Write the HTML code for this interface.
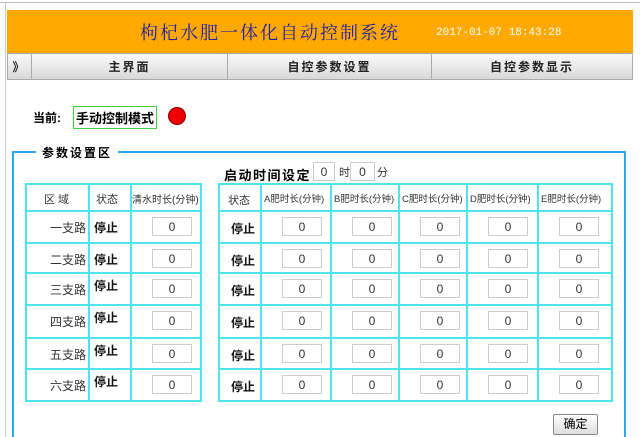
<!DOCTYPE html><html><head><meta charset="utf-8"><style>
html,body{margin:0;width:640px;height:437px;overflow:hidden}
body{background:#fff;position:relative;font-family:"Liberation Sans","Noto Sans CJK SC",sans-serif;}
.a{position:absolute}
.hdr{left:7px;top:10px;width:626px;height:43px;background:#ffa800;}
.title{left:140px;top:19px;font-size:18px;color:#2020a0;font-family:"Liberation Serif","Noto Serif CJK SC",serif;letter-spacing:2px}
.time{left:436px;top:27px;font-size:11px;color:#fff;font-family:"Liberation Mono",monospace}
.nav{top:53px;height:27px;background:linear-gradient(#fafafa,#d8d8d8);border:1px solid #aaa;box-sizing:border-box;font-size:12px;font-weight:bold;text-align:center;line-height:26px;color:#222;letter-spacing:2px}
.in{position:absolute;width:40px;height:19px;border:1px solid #ccc;background:#fff;font-size:12px;color:#333;text-align:center;line-height:19px;box-sizing:border-box}
.t{position:absolute;font-size:11px;color:#333}
.b{position:absolute;font-size:12px;font-weight:bold;color:#111}
.hl{position:absolute;height:2px;background:#4ee4ee}
.vl{position:absolute;width:2px;background:#4ee4ee}
</style></head><body>
<div class="a" style="left:0;top:2px;width:640px;height:1px;background:#bbb"></div>
<div class="a" style="left:5px;top:3px;width:1px;height:434px;background:#ccc"></div>
<div class="a hdr"></div>
<div class="a title">枸杞水肥一体化自动控制系统</div>
<div class="a time">2017-01-07 18:43:28</div>
<div class="a nav" style="left:7px;width:25px">》</div>
<div class="a nav" style="left:31px;width:197px">主界面</div>
<div class="a nav" style="left:227px;width:205px">自控参数设置</div>
<div class="a nav" style="left:431px;width:202px">自控参数显示</div>
<div class="a" style="left:33px;top:109px;font-size:12px;font-weight:bold">当前:</div>
<div class="a" style="left:73px;top:106px;border:1px solid #4c4;padding:1px 2px;font-size:13px;font-weight:bold">手动控制模式</div>
<div class="a" style="left:169px;top:108px;width:16px;height:16px;border-radius:50%;background:#e00;box-shadow:0 0 0 1px #800"></div>
<div class="a" style="left:12px;top:151px;width:614px;height:286px;border:2px solid #2aa8e8;border-bottom:none;box-sizing:border-box"></div>
<div class="a" style="left:36px;top:144px;background:#fff;padding:0 6px;font-size:12px;font-weight:bold;letter-spacing:2px">参数设置区</div>
<div class="a" style="left:224px;top:165px;font-size:13px;font-weight:bold;letter-spacing:1.5px">启动时间设定</div>
<div class="in" style="left:313px;top:162px;width:22px">0</div><div class="t" style="left:339px;top:164px">时</div>
<div class="in" style="left:350px;top:162px;width:25px">0</div><div class="t" style="left:377px;top:164px">分</div>
<div id="g"></div>
<div class="a" style="left:553px;top:414px;width:43px;height:19px;border:1px solid #888;background:linear-gradient(#fff,#ddd);font-size:12px;text-align:center;line-height:19px;border-radius:2px">确定</div>
<script>
var rows=[183,210,242,272,304,337,368,400];
var L=[25,88,130,200],R=[218,260,330,398,466,537,611];
var h='';
rows.forEach(function(y){h+='<div class="hl" style="left:25px;top:'+y+'px;width:177px"></div><div class="hl" style="left:218px;top:'+y+'px;width:395px"></div>';});
L.forEach(function(x){h+='<div class="vl" style="left:'+x+'px;top:183px;height:219px"></div>';});
R.forEach(function(x){h+='<div class="vl" style="left:'+x+'px;top:183px;height:219px"></div>';});
h+='<div class="t" style="left:44px;top:191px">区 域</div><div class="t" style="left:96px;top:191px">状态</div><div class="t" style="left:132px;top:191px;font-size:10px">清水时长(分钟)</div>';
h+='<div class="t" style="left:228px;top:192px">状态</div>';
['A','B','C','D','E'].forEach(function(c,i){h+='<div class="t" style="left:'+(R[i+1]+4)+'px;top:191px;font-size:9.5px">'+c+'肥时长(分钟)</div>';});
var nm=['一','二','三','四','五','六'];
for(var i=0;i<6;i++){var y=rows[i+1];
h+='<div class="t" style="left:50px;top:'+(y+9)+'px;font-size:12px">'+nm[i]+'支路</div>';
h+='<div class="b" style="left:94px;top:'+(y+(i<2?9:5))+'px">停止</div>';
h+='<div class="in" style="left:152px;top:'+(y+7)+'px">0</div>';
h+='<div class="b" style="left:231px;top:'+(y+10)+'px">停止</div>';
for(var j=0;j<5;j++)h+='<div class="in" style="left:'+(R[j+1]+22)+'px;top:'+(y+7)+'px">0</div>';}
document.getElementById('g').innerHTML=h;
</script>
</body></html>
